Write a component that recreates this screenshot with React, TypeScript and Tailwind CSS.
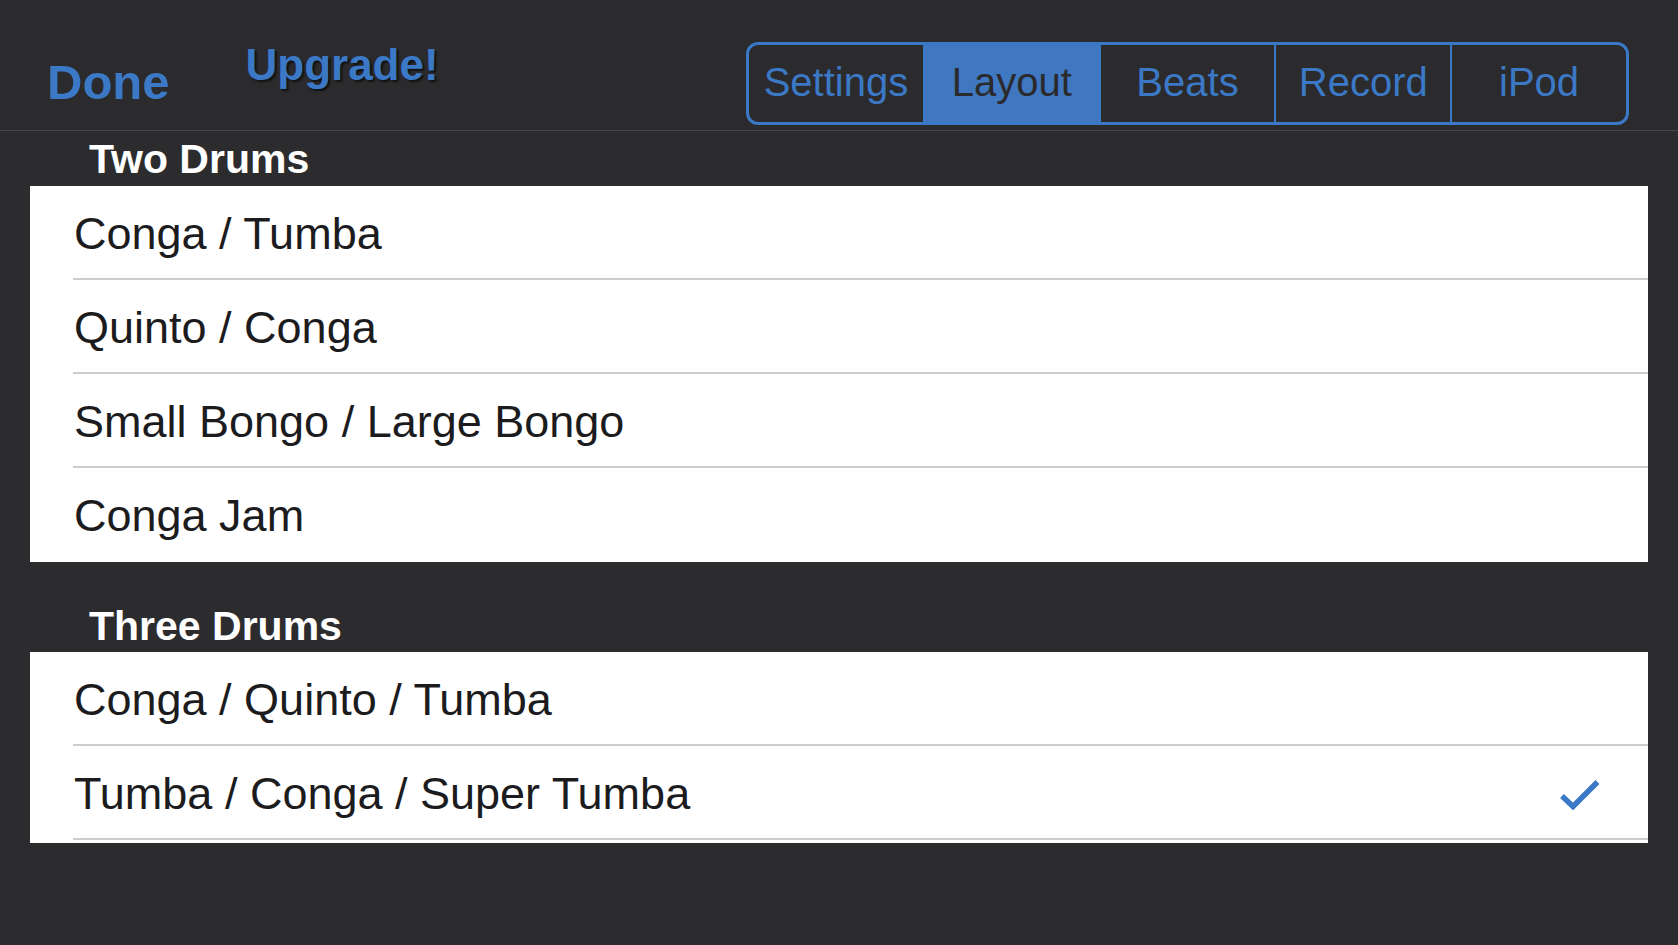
import React from "react";

const BLUE = "#3b78c5";

function Row({ label, checked, sep }: { label: string; checked?: boolean; sep: boolean }) {
  return (
    <div className="relative flex h-[94px] items-center pl-[44px] pr-[48px]">
      <span className="flex-1 text-[45px] leading-none text-[#1c1c1e]" style={{ fontFamily: '"Liberation Sans", Arial, sans-serif' }}>
        {label}
      </span>
      {checked && (
        <svg width="41" height="32" viewBox="0 0 41 32" className="mt-[1px]">
          <path d="M3 18 L14 28.5 L38.5 4" fill="none" stroke={BLUE} strokeWidth="5.5" strokeLinecap="butt" strokeLinejoin="miter" />
        </svg>
      )}
      {sep && <div className="absolute bottom-0 left-[43px] right-0 h-[2px] bg-[#cdcdd1]" />}
    </div>
  );
}

export default function App() {
  const tabs = ["Settings", "Layout", "Beats", "Record", "iPod"];
  const font = { fontFamily: '"Liberation Sans", Arial, sans-serif' };
  return (
    <div className="flex h-[945px] w-[1678px] flex-col overflow-hidden bg-[#2c2c2e]" style={font}>
      {/* Header */}
      <div className="flex h-[131px] shrink-0 items-start border-b border-[#47474a] bg-[#2b2b2d]">
        <span className="ml-[47px] mt-[58px] text-[49px] font-bold leading-none" style={{ color: BLUE }}>
          Done
        </span>
        <span
          className="ml-[76px] mt-[43px] text-[44px] font-bold leading-none"
          style={{ color: BLUE, textShadow: "2px 2px 2px rgba(0,0,0,0.6)" }}
        >
          Upgrade!
        </span>
        <div className="ml-auto mr-[49px] mt-[42px] flex h-[83px] w-[883px] overflow-hidden rounded-[12px] border-[3px] border-[#3b78c5]">
          {tabs.map((t, i) => (
            <div
              key={t}
              className={
                "flex flex-1 items-center justify-center pb-[4px] text-[40px] leading-none " +
                (i > 0 ? "border-l-2 border-[#3b78c5] " : "") +
                (t === "Layout" ? "bg-[#3f77c0] text-[#2a2a2d]" : "text-[#3b78c5]")
              }
            >
              {t}
            </div>
          ))}
        </div>
      </div>

      {/* Section 1 header */}
      <div className="h-[55px] shrink-0 pl-[89px] pt-[8px]">
        <span className="text-[41px] font-bold leading-none text-white">Two Drums</span>
      </div>
      <div className="mx-[30px] bg-white">
        <Row label="Conga / Tumba" sep />
        <Row label="Quinto / Conga" sep />
        <Row label="Small Bongo / Large Bongo" sep />
        <Row label="Conga Jam" sep={false} />
      </div>

      {/* Section 2 header */}
      <div className="h-[90px] shrink-0 pl-[89px] pt-[44px]">
        <span className="text-[41px] font-bold leading-none text-white">Three Drums</span>
      </div>
      <div className="mx-[30px] bg-white pb-[3px]">
        <Row label="Conga / Quinto / Tumba" sep />
        <Row label="Tumba / Conga / Super Tumba" checked sep />
      </div>
    </div>
  );
}
